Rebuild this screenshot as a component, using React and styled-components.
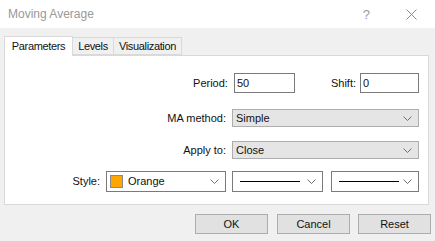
import React from 'react';
import styled, { createGlobalStyle } from 'styled-components';

const GlobalStyle = createGlobalStyle`
  html, body {
    margin: 0;
    padding: 0;
    background: #f0f0f0;
    font-family: "Liberation Sans", Arial, sans-serif;
    font-size: 11px;
    color: #111;
  }
`;

const Chevron = () => (
  <svg width="9" height="5" viewBox="0 0 9 5">
    <polyline points="0.5,0.5 4.5,4.5 8.5,0.5" fill="none" stroke="#707070" strokeWidth="1" />
  </svg>
);

const App = () => {
  return (
    <Dialog>
      <GlobalStyle />
      <TitleBar>
        <Title>Moving Average</Title>
        <TitleButtons>
          <Help>?</Help>
          <svg width="11" height="11" viewBox="0 0 11 11">
            <path d="M0.5 0.5 L10.5 10.5 M10.5 0.5 L0.5 10.5" stroke="#8a8a8a" strokeWidth="1" />
          </svg>
        </TitleButtons>
      </TitleBar>

      <Body>
        <Tabs>
          <Tab $active $w={69}>Parameters</Tab>
          <Tab $w={41}>Levels</Tab>
          <Tab $w={68}>Visualization</Tab>
        </Tabs>
        <Panel>
          <Row $top={17}>
            <Label>Period:</Label>
            <Input $w={61}>50</Input>
            <Label $gap={36} $space={4}>Shift:</Label>
            <Input $w={59}>0</Input>
          </Row>
          <Row $top={15}>
            <Label>MA method:</Label>
            <Select $w={187} $gray>
              <span>Simple</span>
              <Chevron />
            </Select>
          </Row>
          <Row $top={12}>
            <Label>Apply to:</Label>
            <Select $w={187} $gray>
              <span>Close</span>
              <Chevron />
            </Select>
          </Row>
          <Row $top={11}>
            <Label>Style:</Label>
            <Select $w={120}>
              <ColorName>
                <Swatch $color="#ffa500" />
                Orange
              </ColorName>
              <Chevron />
            </Select>
            <Select $w={91} $gap={6}>
              <LineSample />
              <Chevron />
            </Select>
            <Select $w={88} $gap={8}>
              <LineSample />
              <Chevron />
            </Select>
          </Row>
        </Panel>
        <Footer>
          <Button>OK</Button>
          <Button $gap={9}>Cancel</Button>
          <Button $gap={8}>Reset</Button>
        </Footer>
      </Body>
    </Dialog>
  );
};

const Dialog = styled.div`
  width: 435px;
  height: 241px;
  background: #f0f0f0;
  overflow: hidden;
`;

const TitleBar = styled.div`
  height: 28px;
  background: #fff;
  display: flex;
  align-items: center;
  justify-content: space-between;
  padding: 0 18px 0 8px;
`;

const Title = styled.div`
  font-size: 12px;
  color: #999;
`;

const TitleButtons = styled.div`
  display: flex;
  align-items: center;
  gap: 36px;
`;

const Help = styled.span`
  font-size: 13px;
  color: #9a9a9a;
`;

const Body = styled.div`
  padding: 7px 4px 0 4px;
`;

const Tabs = styled.div`
  display: flex;
  align-items: flex-end;
  height: 20px;
`;

const Tab = styled.div`
  width: ${p => p.$w}px;
  height: ${p => (p.$active ? 20 : 18)}px;
  box-sizing: border-box;
  background: ${p => (p.$active ? '#fff' : '#f0f0f0')};
  border: 1px solid #d9d9d9;
  border-bottom: ${p => (p.$active ? 'none' : '1px solid #d9d9d9')};
  border-left: ${p => (p.$active ? '1px solid #d9d9d9' : 'none')};
  margin-bottom: ${p => (p.$active ? -1 : 0)}px;
  padding-bottom: ${p => (p.$active ? 2 : 0)}px;
  position: relative;
  z-index: ${p => (p.$active ? 1 : 0)};
  display: flex;
  align-items: center;
  justify-content: center;
  white-space: nowrap;
  letter-spacing: -0.35px;
`;

const Panel = styled.div`
  width: 425px;
  height: 150px;
  box-sizing: border-box;
  background: #fff;
  border: 1px solid #d9d9d9;
  padding: 0 9px 0 0;
  display: flex;
  flex-direction: column;
`;

const Row = styled.div`
  margin-top: ${p => p.$top}px;
  height: 20px;
  display: flex;
  align-items: center;
  justify-content: flex-end;
`;

const Label = styled.span`
  margin-left: ${p => p.$gap || 0}px;
  margin-right: ${p => p.$space || 6}px;
`;

const Input = styled.div`
  width: ${p => p.$w}px;
  height: 20px;
  box-sizing: border-box;
  border: 1px solid #7a7a7a;
  padding: 0 2px;
  display: flex;
  align-items: center;
`;

const Select = styled.div`
  width: ${p => p.$w}px;
  height: ${p => (p.$gray ? 18 : 21)}px;
  margin-left: ${p => p.$gap || 0}px;
  box-sizing: border-box;
  border: 1px solid ${p => (p.$gray ? '#adadad' : '#7a7a7a')};
  background: ${p => (p.$gray ? '#e5e5e5' : '#fff')};
  padding: 0 6px 0 3px;
  display: flex;
  align-items: center;
  justify-content: space-between;
`;

const ColorName = styled.span`
  display: flex;
  align-items: center;
  gap: 5px;
`;

const Swatch = styled.span`
  width: 13px;
  height: 13px;
  box-sizing: border-box;
  background: ${p => p.$color};
  border: 1px solid #8a8a8a;
`;

const LineSample = styled.span`
  width: 60px;
  height: 1px;
  margin-left: 4px;
  background: #000;
`;

const Footer = styled.div`
  display: flex;
  justify-content: flex-end;
  margin-top: 9px;
`;

const Button = styled.div`
  width: 73px;
  height: 20px;
  margin-left: ${p => p.$gap || 0}px;
  box-sizing: border-box;
  background: #e1e1e1;
  border: 1px solid #adadad;
  display: flex;
  align-items: center;
  justify-content: center;
`;

export default App;
